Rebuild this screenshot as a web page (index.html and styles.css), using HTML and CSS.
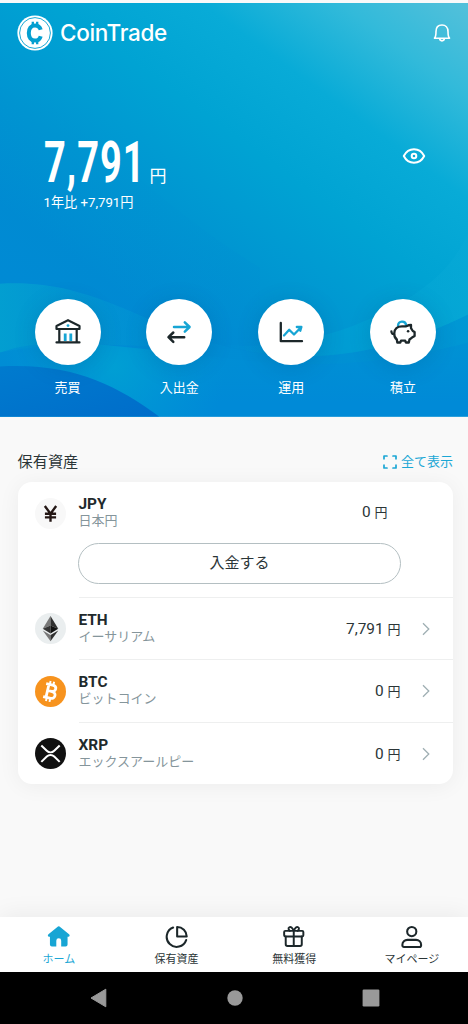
FILE: index.html
```html
<!DOCTYPE html>
<html lang="ja">
<head>
<meta charset="utf-8">
<meta name="viewport" content="width=device-width, initial-scale=1">
<title>CoinTrade</title>
<link rel="stylesheet" href="styles.css">
</head>
<body>
<div class="app">
  <section class="hero">
    <svg class="hero-bg" viewBox="0 0 468 414" preserveAspectRatio="none" aria-hidden="true">
      <defs>
        <linearGradient id="base" gradientUnits="userSpaceOnUse" x1="462" y1="0" x2="175" y2="390">
          <stop offset="0" stop-color="#52c0da"/><stop offset=".15" stop-color="#32bada"/><stop offset=".32" stop-color="#08abd7"/><stop offset=".5" stop-color="#00a3d3"/><stop offset=".72" stop-color="#0094d1"/><stop offset=".9" stop-color="#008ad2"/><stop offset="1" stop-color="#008ad4"/>
        </linearGradient>
        <linearGradient id="left" x1="0" y1="0" x2="0" y2="1">
          <stop offset="0" stop-color="#0098d0" stop-opacity="0"/><stop offset="1" stop-color="#0084d5" stop-opacity=".5"/>
        </linearGradient>
        <linearGradient id="fadeRight" x1="0" y1="0" x2="1" y2="0">
          <stop offset="0" stop-color="#03a3d0" stop-opacity=".8"/><stop offset=".4" stop-color="#0499d2" stop-opacity=".6"/><stop offset="1" stop-color="#008ed4" stop-opacity=".15"/>
        </linearGradient>
        <linearGradient id="swell" gradientUnits="userSpaceOnUse" x1="0" y1="0" x2="468" y2="0">
          <stop offset=".47" stop-color="#00a4d5" stop-opacity="0"/><stop offset=".75" stop-color="#00a3d5" stop-opacity=".55"/><stop offset="1" stop-color="#08a9d6" stop-opacity=".65"/>
        </linearGradient>
        <linearGradient id="deep" x1="0" y1="0" x2="1" y2="0">
          <stop offset="0" stop-color="#008bd3"/><stop offset="1" stop-color="#0090d5" stop-opacity=".55"/>
        </linearGradient>
        <linearGradient id="floor" gradientUnits="userSpaceOnUse" x1="0" y1="335" x2="0" y2="400">
          <stop offset="0" stop-color="#0090d4" stop-opacity=".65"/><stop offset="1" stop-color="#008ad7"/>
        </linearGradient>
        <radialGradient id="glow" gradientUnits="userSpaceOnUse" cx="115" cy="365" r="110">
          <stop offset="0" stop-color="#00a3d3" stop-opacity=".8"/><stop offset="1" stop-color="#009bd5" stop-opacity="0"/>
        </radialGradient>
        <linearGradient id="dark" x1="0" y1="0" x2="1" y2="1">
          <stop offset="0" stop-color="#007bce"/><stop offset="1" stop-color="#006dca"/>
        </linearGradient>
      </defs>
      <rect width="468" height="414" fill="url(#base)"/>
      <path d="M0 60C90 130 170 210 260 265V370H0Z" fill="url(#left)" opacity=".6"/>
      <path d="M0 281C90 276 135 319 222 343C310 367 390 350 468 312V414H0Z" fill="url(#deep)"/>
      <path d="M220 342C300 350 380 320 430 280C445 268 460 250 468 230V312C390 350 310 367 220 342Z" fill="url(#swell)"/>
      <path d="M0 281C90 276 135 319 222 343C180 350 80 333 0 350Z" fill="url(#fadeRight)"/>
      <path d="M0 350C50 331 120 345 180 350C260 360 340 374 468 340V414H0Z" fill="url(#floor)"/>
      <path d="M0 350C50 331 120 345 180 350L270 367V414H0Z" fill="url(#glow)"/>
      <path d="M0 364C72 360 115 382 159 414H0Z" fill="url(#dark)"/>
    </svg>

    <header class="topbar">
      <div class="brand">
        <svg class="brand-mark" viewBox="0 0 36 36" aria-hidden="true">
          <circle cx="18" cy="18" r="17.6" fill="#fff"/>
          <circle cx="18" cy="18" r="15.4" fill="none" stroke="#049fd0" stroke-width=".9"/>
          <g fill="none" stroke="#049fd0">
            <path d="M23.7 14.8C22.9 11.8 20.8 10.4 18 10.4C14 10.4 11.8 13.5 11.8 18S14 25.6 18 25.6C20.8 25.6 22.9 24.2 23.7 21.2" stroke-width="4"/>
            <path d="M15.8 6.8V11M20.2 6.8V11M15.8 25V29.2M20.2 25V29.2" stroke-width="2.3"/>
          </g>
        </svg>
        <span class="brand-name">CoinTrade</span>
      </div>
      <svg class="bell" viewBox="0 0 18 20" fill="none" stroke="#fff" stroke-width="1.6" stroke-linejoin="round" stroke-linecap="round" aria-hidden="true">
        <path d="M1.5 15.2H16.5C15.2 14 15 12.8 15 8.5C15 4.5 12.6 2 9 2S3 4.5 3 8.5C3 12.8 2.8 14 1.5 15.2ZM6.7 15.6C6.7 18.6 11.3 18.6 11.3 15.6"/>
      </svg>
    </header>

    <div class="balance">
      <div>
        <p class="total"><span class="total-slot"><span class="total-value">7,791</span></span><span class="total-unit">円</span></p>
        <p class="change">1年比 +7,791円</p>
      </div>
      <svg class="eye" viewBox="0 0 24 18" fill="none" stroke="#fff" stroke-width="2" aria-hidden="true">
        <path d="M1.8 9C6.3 0 17.7 0 22.2 9C17.7 18 6.3 18 1.8 9Z" stroke-linejoin="round"/><circle cx="12" cy="9" r="2.3"/>
      </svg>
    </div>

    <nav class="actions">
      <a class="action"><span class="disc"><svg viewBox="0 0 30 30" fill="none" stroke="#1c272a" stroke-width="2.2" stroke-linecap="round" stroke-linejoin="round">
        <path d="M15 3.2L26.5 9V12H3.5V9ZM6.3 12V25M23.7 12V25M3.5 25.4H26.5"/><path d="M12.2 16.5V24M17.8 16.5V24" stroke="#17a5d4" stroke-width="2.8" stroke-linecap="butt"/><circle cx="15" cy="8.6" r="1.4" fill="#17a5d4" stroke="none"/></svg></span><span>売買</span></a>
      <a class="action"><span class="disc"><svg viewBox="0 0 30 30" fill="none" stroke-width="2.5" stroke-linecap="round" stroke-linejoin="round">
        <path d="M10 10H25.3M20.8 5.3L25.6 10L20.8 14.7" stroke="#17a5d4"/><path d="M20.2 20.2H5M9.3 15.5L4.5 20.2L9.3 24.9" stroke="#1c272a"/></svg></span><span>入出金</span></a>
      <a class="action"><span class="disc"><svg viewBox="0 0 30 30" fill="none" stroke-width="2.3" stroke-linecap="round" stroke-linejoin="round">
        <path d="M4.8 6V24.2H26" stroke="#1c272a"/><path d="M8 18.5L13.2 12.8L18 17.5L24.6 10.7M20.8 10H25.4L24.3 13.7" stroke="#17a5d4"/></svg></span><span>運用</span></a>
      <a class="action"><span class="disc"><svg viewBox="0 0 30 30" fill="none" stroke="#1c272a" stroke-width="2.3" stroke-linecap="round" stroke-linejoin="round">
        <path d="M10 8.8C10.3 3.5 17.4 3.4 18.2 8.2" stroke="#17a5d4"/><path d="M3.4 14.3C3.5 17 4.8 17.5 6.3 16.3C6.3 12 9.5 9.3 14 9.3H18.2C20 8.4 21.5 8 23 8V11.2L24.8 14L26.6 15V19L24 20.6L21.5 22.5L20.8 25.5H17.8L17.2 23.7H13L12.3 25.5H9.3L8.8 22.5C7 21 6 19 6.3 16.3"/><circle cx="20.1" cy="14.2" r="1.3" fill="#1c272a" stroke="none"/></svg></span><span>積立</span></a>
    </nav>
  </section>

  <main class="assets">
    <div class="assets-head">
      <h2>保有資産</h2>
      <a class="show-all"><svg viewBox="0 0 14 14" fill="none" stroke="#1ba7d5" stroke-width="1.7" stroke-linecap="round" stroke-linejoin="round"><path d="M1 3.8V1H4M10 1H13V3.8M13 10.2V13H10M4 13H1V10.2"/></svg>全て表示</a>
    </div>
    <div class="card">
      <div class="asset asset-cash">
        <svg class="coin" viewBox="0 0 30 30"><circle cx="15" cy="15" r="15" fill="#f8f8f8"/><path d="M9.5 7.7L15 15.3L20.5 7.7M15 15V23M9.6 15.3H20.4M9.6 18.8H20.4" fill="none" stroke="#241715" stroke-width="2.3"/></svg>
        <div class="asset-body">
          <div class="asset-line"><div class="names"><b>JPY</b><small>日本円</small></div><span class="amount">0 <i>円</i></span></div>
          <button class="deposit">入金する</button>
        </div>
      </div>
      <div class="asset">
        <svg class="coin" viewBox="0 0 30 30"><circle cx="15" cy="15" r="15" fill="#eaeeef"/><path d="M15 2.8L7.5 15.2L15 12Z" fill="#777"/><path d="M15 2.8L22.5 15.2L15 12Z" fill="#303030"/><path d="M7.5 15.2L15 12V19.8Z" fill="#353535"/><path d="M22.5 15.2L15 12V19.8Z" fill="#111"/><path d="M7.5 17L15 21.4V27.4Z" fill="#777"/><path d="M22.5 17L15 21.4V27.4Z" fill="#303030"/></svg>
        <div class="asset-body"><div class="asset-line"><div class="names"><b>ETH</b><small>イーサリアム</small></div><span class="amount">7,791 <i>円</i></span><svg class="chevron" viewBox="0 0 8 14"><path d="M1 1.2L6.8 7L1 12.8"/></svg></div></div>
      </div>
      <div class="asset">
        <svg class="coin" viewBox="0 0 30 30"><circle cx="15" cy="15" r="15" fill="#f7931e"/><g transform="rotate(13 15 15)" fill="none" stroke="#fff"><path d="M9.2 8.5H15.7C20.6 8.5 20.6 14.6 15.8 14.6H12M15.8 14.6C21.6 14.6 21.6 21.5 15.8 21.5H9.2M12 8.5V21.5" stroke-width="2.7"/><path d="M12.8 5V8.5M16.3 5V8.5M12.8 21.5V25M16.3 21.5V25" stroke-width="1.9"/></g></svg>
        <div class="asset-body"><div class="asset-line"><div class="names"><b>BTC</b><small>ビットコイン</small></div><span class="amount">0 <i>円</i></span><svg class="chevron" viewBox="0 0 8 14"><path d="M1 1.2L6.8 7L1 12.8"/></svg></div></div>
      </div>
      <div class="asset">
        <svg class="coin" viewBox="0 0 30 30"><circle cx="15" cy="15" r="15" fill="#111"/><path d="M6.1 7.2L11.4 12.3C13.5 14.3 16.5 14.3 18.6 12.3L23.9 7.2M6.1 23.1L11.4 18C13.5 16 16.5 16 18.6 18L23.9 23.1" fill="none" stroke="#fff" stroke-width="2"/></svg>
        <div class="asset-body"><div class="asset-line"><div class="names"><b>XRP</b><small>エックスアールピー</small></div><span class="amount">0 <i>円</i></span><svg class="chevron" viewBox="0 0 8 14"><path d="M1 1.2L6.8 7L1 12.8"/></svg></div></div>
      </div>
    </div>
  </main>

  <nav class="tabs">
    <a class="tab tab-active"><svg viewBox="0 0 24 24"><path d="M12 1.4C12.6 1.4 13 1.7 13.4 2L22.5 9.5C23.7 10.6 23 12 21.8 12H21V20Q21 22 19 22H14.5V16Q14.5 13.5 12 13.5T9.5 16V22H5Q3 22 3 20V12H2.2C1 12 .3 10.6 1.5 9.5L10.6 2C11 1.7 11.4 1.4 12 1.4Z" fill="#17a5d4"/></svg><span>ホーム</span></a>
    <a class="tab"><svg viewBox="0 0 24 24" fill="none" stroke="#1c272a" stroke-width="2.1" stroke-linecap="round" stroke-linejoin="round"><path d="M8.3 2.6A10.2 10.2 0 1 0 21.6 15.4"/><path d="M12.4 2V11.7H22.2A9.8 9.8 0 0 0 12.4 2Z"/></svg><span>保有資産</span></a>
    <a class="tab"><svg viewBox="0 0 24 24" fill="none" stroke="#1c272a" stroke-width="2" stroke-linejoin="round" stroke-linecap="round"><rect x="2.2" y="6" width="19.6" height="5.7" rx="1.2"/><path d="M3.8 11.7V19.7Q3.8 21.5 5.6 21.5H18.4Q20.2 21.5 20.2 19.7V11.7M12 6V21.5M12 6C10.5 2.8 9 1.5 7.5 2.3C5.7 3.3 7.2 5.2 8 6M12 6C13.5 2.8 15 1.5 16.5 2.3C18.3 3.3 16.8 5.2 16 6"/></svg><span>無料獲得</span></a>
    <a class="tab"><svg viewBox="0 0 24 24" fill="none" stroke="#1c272a" stroke-width="2.1" stroke-linejoin="round"><circle cx="12" cy="6.7" r="4.7"/><path d="M2.4 20.3C2.4 17 4.8 15.2 7.6 15.2H16.4C19.2 15.2 21.6 17 21.6 20.3C21.6 21.8 21.1 22.4 19.9 22.4H4.1C2.9 22.4 2.4 21.8 2.4 20.3Z"/></svg><span>マイページ</span></a>
  </nav>
  <footer class="system">
    <svg viewBox="0 0 18 20"><path d="M15.8 1.2V18.8L1 10Z" fill="#999" stroke="#999" stroke-linejoin="round"/></svg>
    <svg viewBox="0 0 18 20"><circle cx="9" cy="10" r="7.7" fill="#999"/></svg>
    <svg viewBox="0 0 18 20"><rect x=".6" y="1.6" width="16.8" height="16.8" rx="1.2" fill="#999"/></svg>
  </footer>
</div>
</body>
</html>
```
FILE: styles.css
```css
* { box-sizing: border-box; }
body {
  margin: 0;
  background: #f9f9f9;
  color: #2b3537;
  font-family: Roboto, "Noto Sans CJK JP", sans-serif;
}
p, h2 { margin: 0; }
svg { display: block; flex: none; }
.app { display: flex; flex-direction: column; height: 1024px; padding-top: 3px; overflow: hidden; }

.hero { position: relative; isolation: isolate; height: 413.5px; color: #fff; overflow: hidden; }
.hero-bg { position: absolute; inset: 0; z-index: -1; width: 100%; height: 100%; }
.topbar { display: flex; justify-content: space-between; align-items: center; height: 60px; padding: 0 17px; }
.brand { display: flex; align-items: center; gap: 7px; }
.brand-mark { width: 36px; height: 36px; }
.brand-name { font: 500 22.5px/30px Inter, sans-serif; letter-spacing: -.3px; }
.bell { width: 18px; height: 20px; }

.balance { display: flex; justify-content: space-between; padding: 69px 42px 0 43.5px; height: 233px; }
.total { display: flex; align-items: flex-end; height: 56px; gap: 7px; }
.total-slot { width: 99px; height: 56px; padding-top: 3px; }
.total-value { display: inline-block; font: 700 57px/56px Roboto, sans-serif; letter-spacing: 1.6px; transform: scaleX(.665); transform-origin: 0 50%; }
.total-unit { font-size: 17px; line-height: 22px; padding-bottom: 1px; }
.change { font-size: 13.2px; line-height: 20px; margin-top: 5px; }
.eye { width: 24px; height: 18px; margin-top: 15px; }

.actions { display: flex; justify-content: space-between; padding: 2.5px 28.5px 0 31px; }
.action { display: flex; flex-direction: column; align-items: center; gap: 13px; width: 73px; font-size: 13px; line-height: 20px; }
.disc { display: grid; place-items: center; width: 66px; height: 66px; border-radius: 50%; background: #fff; box-shadow: 0 3px 22px rgba(0, 70, 120, .2); }
.disc svg { width: 30px; height: 30px; }

.assets { flex: 1; padding: 33px 15px 0 17.5px; }
.assets-head { display: flex; justify-content: space-between; align-items: center; height: 24px; }
.assets-head h2 { font-size: 15.2px; font-weight: 400; line-height: 24px; }
.show-all { display: flex; align-items: center; gap: 4px; color: #1ba7d5; font-size: 13px; line-height: 22px; }
.show-all svg { width: 14px; height: 14px; }
.card { margin-top: 8.5px; height: 302px; border-radius: 14px; background: #fff; box-shadow: 0 2px 22px rgba(0, 0, 0, .055); padding-left: 17.5px; }
.asset { display: flex; gap: 12.5px; height: 62.5px; }
.asset-cash { height: 115.5px; }
.coin { width: 31px; height: 31px; margin-top: 15.5px; }
.asset-body { flex: 1; border-bottom: 1.5px solid #eeefef; }
.asset:last-child .asset-body { border-bottom: 0; }
.asset-line { display: flex; align-items: center; height: 62px; padding-right: 23.5px; }
.asset-cash .asset-line { padding-right: 65.5px; height: 60.5px; }
.names { flex: 1; display: flex; flex-direction: column; }
.names b { font-size: 15.4px; font-weight: 700; line-height: 17px; color: #1f2a2c; }
.names small { font-size: 13px; line-height: 16.5px; color: #85959b; }
.amount { font-size: 15.4px; line-height: 20px; padding-top: 1px; }
.amount i { font-style: normal; font-size: 13px; }
.chevron { width: 8px; height: 14px; margin-left: 21px; fill: none; stroke: #9fafb3; stroke-width: 1.3; }
.deposit { display: block; width: 323px; height: 41px; margin-left: -.5px; padding: 0; border: 1px solid #b4bfc2; border-radius: 21px; background: #fff; color: #2b3537; font: 400 15px/24px Roboto, "Noto Sans CJK JP", sans-serif; }

.tabs { display: grid; grid-template-columns: repeat(4, 117.7px); height: 54.5px; background: #fff; box-shadow: 0 -3px 24px rgba(0, 0, 0, .06); }
.tab { display: flex; flex-direction: column; align-items: center; padding-top: 8px; font-size: 11px; line-height: 16px; gap: 3px; }
.tab svg { width: 23.5px; height: 23.5px; }
.tab-active { color: #1ba7d5; }
.system { display: flex; justify-content: space-between; align-items: center; height: 52.5px; padding: 0 88.5px 0 90px; background: #000; }
.system svg { width: 18px; height: 20px; }
```
